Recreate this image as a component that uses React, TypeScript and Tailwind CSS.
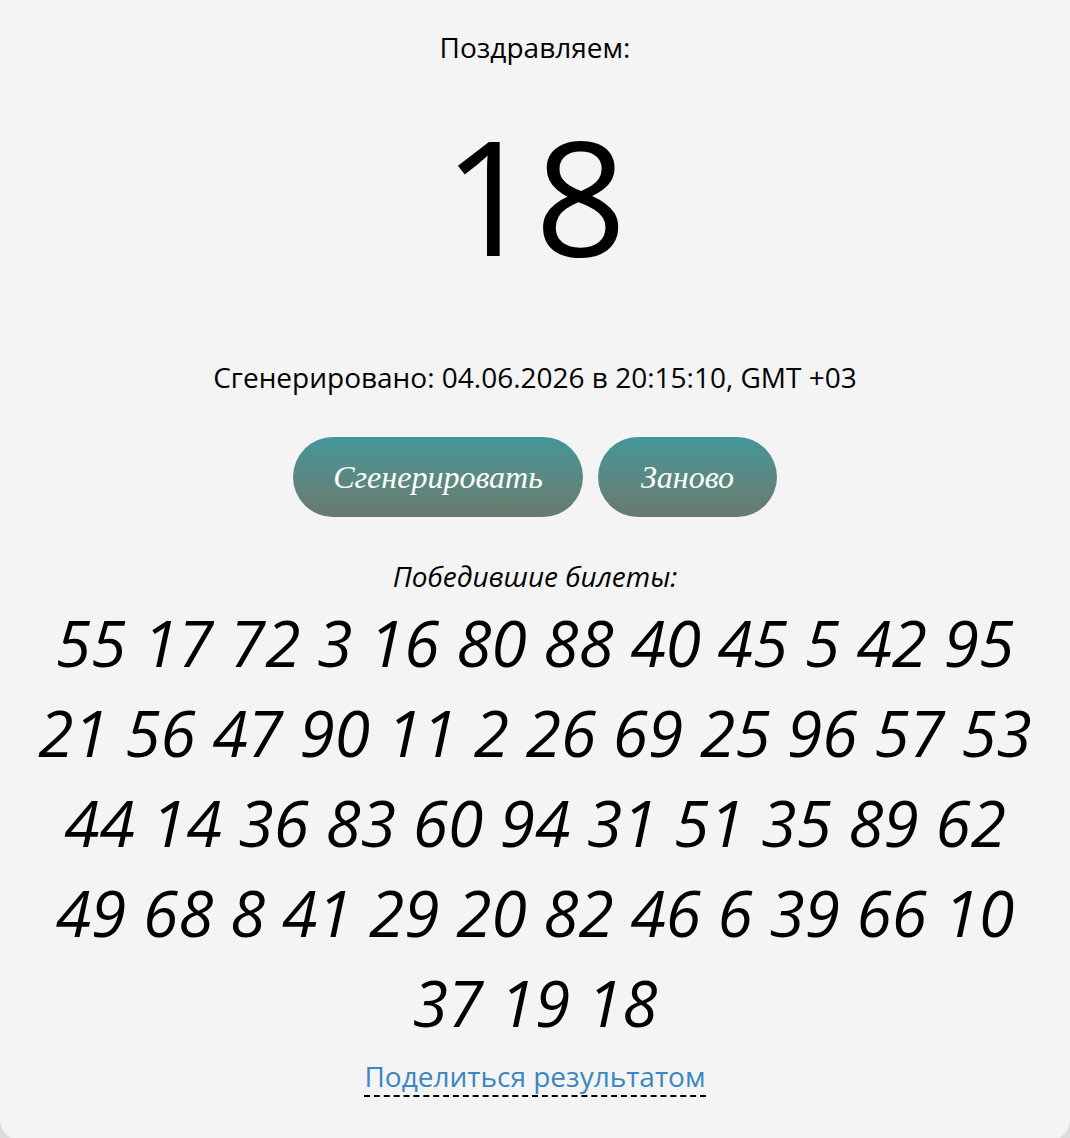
import React from "react";

const numbers = [55, 17, 72, 3, 16, 80, 88, 40, 45, 5, 42, 95, 21, 56, 47, 90, 11, 2, 26, 69, 25, 96, 57, 53, 44, 14, 36, 83, 60, 94, 31, 51, 35, 89, 62, 49, 68, 8, 41, 29, 20, 82, 46, 6, 39, 66, 10, 37, 19, 18];

export default function App() {
  return (
    <div className="min-h-screen bg-[#dcdcdc] font-['Open_Sans',sans-serif] text-black">
      <div className="mx-auto flex min-h-[1140px] w-full flex-col items-center rounded-b-[20px] bg-[#f4f4f4] pt-[28px]">
        <div className="text-[28px] leading-[38px]">Поздравляем:</div>
        <div className="mt-[48px] text-[160px] leading-[160px]">18</div>
        <div className="mt-[84px] text-[28px] leading-[38px]">
          Сгенерировано: 04.06.2026 в 20:15:10, GMT +03
        </div>
        <div className="mt-[41px] flex gap-[15px]">
          <button className="h-[80px] w-[290px] rounded-full bg-gradient-to-b from-[#42979a] to-[#697a6c] font-['Liberation_Serif',serif] text-[32px] italic text-white">
            Сгенерировать
          </button>
          <button className="h-[80px] w-[179px] rounded-full bg-gradient-to-b from-[#42979a] to-[#697a6c] font-['Liberation_Serif',serif] text-[32px] italic text-white">
            Заново
          </button>
        </div>
        <div className="mt-[40px] text-[28px] italic leading-[38px]">Победившие билеты:</div>
        <div className="mt-[3px] w-[1010px] text-center text-[64px] italic leading-[90px]">
          {numbers.join(" ")}
        </div>
        <a
          href="#"
          className="mt-[10px] inline-block border-b-2 border-dashed border-black text-[28px] leading-[37px] text-[#3b86c1]"
        >
          Поделиться результатом
        </a>
      </div>
    </div>
  );
}
